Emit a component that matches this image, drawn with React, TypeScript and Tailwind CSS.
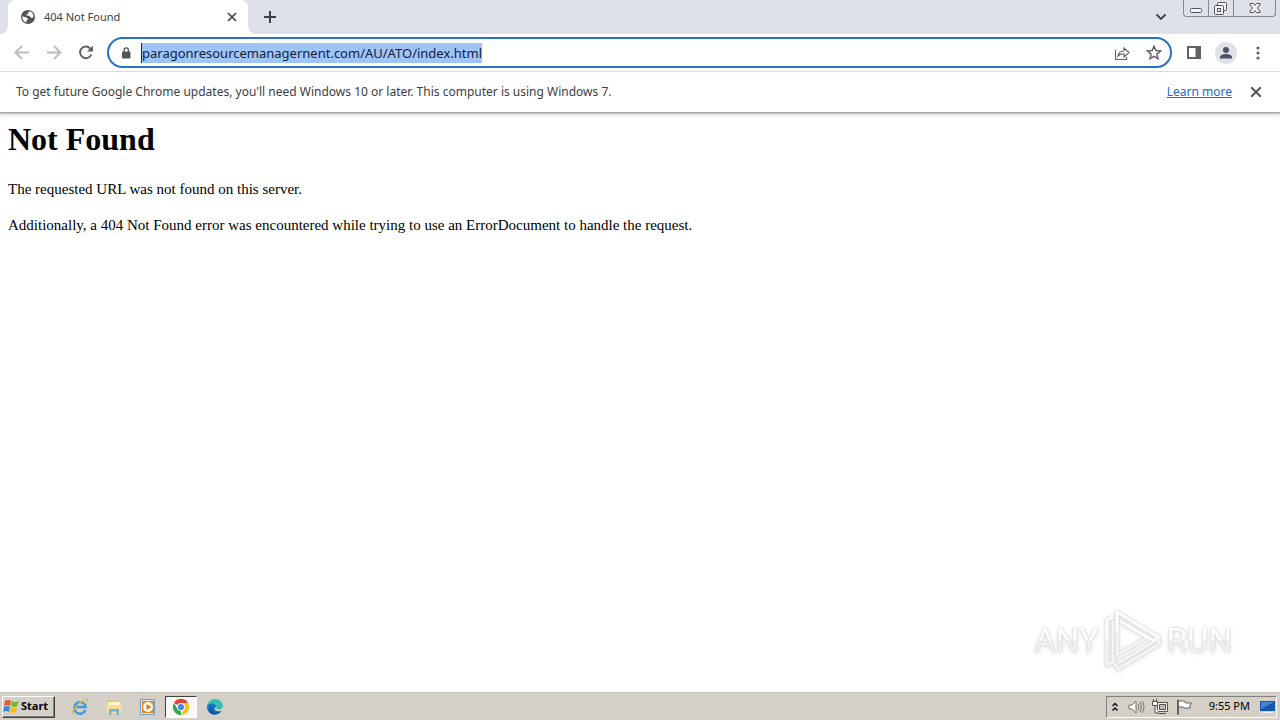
import { useState } from "react";
import type { ReactNode } from "react";

const pageUrl = "paragonresourcemanagernent.com/AU/ATO/index.html";

interface IconButtonProps {
  label: string;
  className?: string;
  children: ReactNode;
}

function IconButton({ label, className = "", children }: IconButtonProps) {
  return (
    <button
      aria-label={label}
      className={`flex shrink-0 items-center justify-center ${className}`}
    >
      {children}
    </button>
  );
}

function CrossIcon({ className }: { className: string }) {
  return (
    <svg viewBox="0 0 10 10" className={className} fill="none" stroke="currentColor" strokeWidth="1.6">
      <path d="M1 1l8 8M9 1L1 9" />
    </svg>
  );
}

function WindowControls() {
  return (
    <div className="flex h-[17px] w-[93px] shrink-0 overflow-hidden rounded-b-[4px] border border-t-0 border-[#85888e] text-[#50545a]">
      <IconButton label="Minimize" className="w-[25px] border-r border-[#85888e]">
        <svg viewBox="0 0 24 16" className="h-4 w-6" fill="#f4f5f7" stroke="currentColor">
          <rect x="6.500" y="8.500" width="11" height="4" rx="1" />
        </svg>
      </IconButton>
      <IconButton label="Restore" className="w-[25px] border-r border-[#85888e]">
        <svg viewBox="0 0 24 16" className="h-4 w-6" fill="#f4f5f7" stroke="currentColor">
          <rect x="8.500" y="2.500" width="9" height="8" rx="1" />
          <rect x="5.500" y="5.500" width="9" height="9" rx="1" />
          <rect x="8.500" y="8.500" width="3" height="3" />
        </svg>
      </IconButton>
      <IconButton label="Close window" className="flex-1">
        <svg viewBox="0 0 14 14" className="size-3.5" fill="#f4f5f7" stroke="currentColor">
          <path d="M2 2.500h3.500L7 4.500l1.500-2H12v1.500L9.300 7 12 10v1.500H8.500L7 9.500l-1.500 2H2V10l2.700-3L2 4z" />
        </svg>
      </IconButton>
    </div>
  );
}

function TabStrip() {
  return (
    <div className="flex h-[34px] items-start bg-[#dee1e8]">
      <div className="flex h-[34px] w-2 shrink-0 bg-white">
        <div className="w-full rounded-br-lg bg-[#dee1e8]" />
      </div>
      <div className="flex h-[34px] w-60 shrink-0 items-center rounded-t-lg bg-white pr-2.5 pl-3">
        <svg viewBox="0 0 16 16" className="size-4 shrink-0">
          <circle cx="8" cy="8" r="7" fill="#505357" />
          <path d="M9.500 2.300L8.400 3.300 8.200 4.700 6.500 5.200 6.600 6.600 9.500 6.800 10.500 8.600 12.400 8.900 13.600 7.200A5.700 5.700 0 0 0 9.500 2.300z" fill="#fff" />
          <path d="M2.400 7.300L5.500 8.300 7.600 9.100 7.800 10.700 6.500 11.300 6.400 13.400A5.600 5.600 0 0 1 2.400 7.300z" fill="#fff" />
        </svg>
        <span className="ml-2 flex-1 text-[11px] text-[#3c4043]">404 Not Found</span>
        <IconButton label="Close tab" className="size-3 text-[#3c4043]">
          <CrossIcon className="size-2.5" />
        </IconButton>
      </div>
      <div className="flex h-[34px] w-2 shrink-0 bg-white">
        <div className="w-full rounded-bl-lg bg-[#dee1e8]" />
      </div>
      <IconButton label="New tab" className="h-[34px] w-7">
        <svg viewBox="0 0 12 12" className="size-3" fill="none" stroke="#3c4043" strokeWidth="2">
          <path d="M6 0v12M0 6h12" />
        </svg>
      </IconButton>
      <div className="flex-1" />
      <IconButton label="Search tabs" className="mr-3.5 h-[34px] w-4">
        <svg viewBox="0 0 12 8" className="h-2 w-3" fill="none" stroke="#3c4043" strokeWidth="1.800">
          <path d="M1.500 1.500L6 6l4.500-4.500" />
        </svg>
      </IconButton>
      <WindowControls />
      <div className="w-1 shrink-0" />
    </div>
  );
}

function Toolbar() {
  const [url, setUrl] = useState(pageUrl);

  return (
    <div className="flex h-[38px] items-center gap-3 border-b border-[#dadce0] bg-white px-3.5 text-[#5f6368]">
      <IconButton label="Back" className="w-4 text-[#babcbe]">
        <svg viewBox="0 0 16 16" className="size-4" fill="none" stroke="currentColor" strokeWidth="1.800">
          <path d="M15 7.500H2M8 1L1.500 7.500 8 14" />
        </svg>
      </IconButton>
      <IconButton label="Forward" className="ml-1 w-4 text-[#babcbe]">
        <svg viewBox="0 0 16 16" className="size-4" fill="none" stroke="currentColor" strokeWidth="1.800">
          <path d="M1 7.500h13M8 1l6.500 6.500L8 14" />
        </svg>
      </IconButton>
      <IconButton label="Reload" className="ml-1 w-4">
        <svg viewBox="0 0 16 16" className="size-4" fill="none" stroke="currentColor" strokeWidth="2">
          <path d="M13.300 9.500A5.800 5.800 0 1 1 12.200 3.500" />
          <path d="M15 .5v6H9z" fill="currentColor" stroke="none" />
        </svg>
      </IconButton>
      <div className="ml-px flex h-[31px] flex-1 items-center rounded-full border-2 border-[#2870cc] pr-2 pl-3">
        <svg viewBox="0 0 10 12" className="h-3 w-2.5 shrink-0">
          <rect x="1" y="4.500" width="8.500" height="7" rx="1" fill="#505357" />
          <path d="M3 5V3a2.200 2.200 0 0 1 4.400 0v2" fill="none" stroke="#505357" strokeWidth="1.300" />
        </svg>
        <div className="ml-2.5 flex min-w-0 flex-1">
          <input
            aria-label="Address"
            value={url}
            spellCheck={false}
            onChange={(e) => setUrl(e.target.value)}
            className="field-sizing-content h-5 max-w-full border-l border-[#202124] bg-[#9fc5f8] text-[13px] text-[#132238] outline-none"
          />
        </div>
        <IconButton label="Share" className="w-4">
          <svg viewBox="0 0 16 16" className="size-4" fill="none" stroke="currentColor" strokeWidth="1.200">
            <path d="M1.500 5v9.500h11V12" />
            <path d="M4 11c.5-3.500 2.500-5 6-5V3l5 4.500-5 4.500V9C7.500 8.800 5.500 9.300 4 11z" />
          </svg>
        </IconButton>
        <IconButton label="Bookmark this page" className="ml-4 w-4">
          <svg viewBox="0 0 16 16" className="size-4" fill="none" stroke="currentColor" strokeWidth="1.500">
            <path d="M8 1.300l1.800 4.300 4.700.4-3.600 3.100 1.100 4.600L8 11.300l-4 2.400 1.100-4.600L1.500 6l4.700-.4z" />
          </svg>
        </IconButton>
      </div>
      <IconButton label="Side panel" className="ml-0.5 w-4">
        <svg viewBox="0 0 16 16" className="size-4">
          <path d="M1 1h14v13H1z" fill="currentColor" />
          <path d="M3 3h6.500v9H3z" fill="#fff" />
        </svg>
      </IconButton>
      <IconButton label="Profile" className="w-6">
        <svg viewBox="0 0 22 22" className="size-[22px]">
          <circle cx="11" cy="11" r="11" fill="#dfe2e6" />
          <circle cx="11" cy="8" r="3" fill="#4a5368" />
          <path d="M5 16.500v-1.500c0-2 3.500-3 6-3s6 1 6 3v1.500z" fill="#4a5368" />
        </svg>
      </IconButton>
      <IconButton label="Menu" className="w-4">
        <svg viewBox="0 0 4 14" className="h-3.5 w-1" fill="currentColor">
          <circle cx="2" cy="2" r="1.600" />
          <circle cx="2" cy="7" r="1.600" />
          <circle cx="2" cy="12" r="1.600" />
        </svg>
      </IconButton>
    </div>
  );
}

function InfoBar() {
  return (
    <div className="flex h-10 items-center bg-white px-4 text-xs text-[#3c4043]">
      <p className="flex-1">
        To get future Google Chrome updates, you'll need Windows 10 or later. This computer is using Windows 7.
      </p>
      <a href="#learn-more" className="text-[#2369c8] underline">
        Learn more
      </a>
      <IconButton label="Dismiss" className="ml-4 w-4 text-[#505357]">
        <CrossIcon className="size-3" />
      </IconButton>
    </div>
  );
}

function Watermark() {
  return (
    <div className="absolute right-12 bottom-5 flex items-center font-['Liberation_Sans_Narrow','Roboto',sans-serif] text-[33px] leading-none [filter:drop-shadow(0_0_1px_#ccc)_drop-shadow(0_1px_2px_#e5e5e5)]">
      <span className="bg-linear-to-b from-white from-50% to-[#f1f1f1] to-50% bg-clip-text text-transparent">ANY</span>
      <svg viewBox="0 0 60 64" className="mx-1 h-16 w-[60px]" fill="none" stroke="#fff" strokeWidth="3">
        <path d="M14 24V4l41 25-4 4-34-20" />
        <path d="M10 9L4 12v20" />
        <path d="M14 24v23l29-17M4 32v25l6-3V14M10 54l5 7 41-25v-5L15 55" stroke="#f4f4f4" />
      </svg>
      <span className="bg-linear-to-b from-white from-50% to-[#f1f1f1] to-50% bg-clip-text text-transparent">RUN</span>
    </div>
  );
}

function ExplorerIcon() {
  return (
    <svg viewBox="0 0 18 18" className="size-[18px]" fill="none">
      <path d="M14.500 12A5.800 5.800 0 1 1 14.800 9H4" stroke="#3a9cdc" strokeWidth="2.400" />
      <path d="M3 15.500C-.5 17 2 10.500 8 5.500S18-.5 16 4" stroke="#e4b74c" strokeWidth="1.300" />
    </svg>
  );
}

function FolderIcon() {
  return (
    <svg viewBox="0 0 18 18" className="size-[18px]">
      <path d="M2 2h5l1 1h7v12H2z" fill="#dfc47a" />
      <path d="M3 4h12v4H3z" fill="#fff6bd" />
      <path d="M1.500 7h15v8.500h-15z" fill="#f3df98" />
      <path d="M4 17v-6h10v6h-2.500v-3.500h-5V17z" fill="#6cb4dd" />
    </svg>
  );
}

function MediaIcon() {
  return (
    <svg viewBox="0 0 18 18" className="size-[18px]">
      <rect x="1.500" y="1.500" width="14" height="15" fill="#dceaf5" stroke="#6ca1cb" />
      <path d="M3 3h12v12H3z" fill="#ed8622" />
      <circle cx="9" cy="9" r="5" fill="#fff" />
      <path d="M7.500 6l5 3-5 3z" fill="#e57515" />
    </svg>
  );
}

function ChromeIcon() {
  return (
    <svg viewBox="0 0 18 18" className="size-[18px]">
      <path d="M9 9L2 5A8 8 0 0 1 16 5z" fill="#e14335" />
      <path d="M9 9V5h7A8 8 0 0 1 9 17l3.500-6z" fill="#fbc116" />
      <path d="M2 5l3.500 6L9 13l0 4A8 8 0 0 1 2 5z" fill="#2da94f" />
      <circle cx="9" cy="9" r="4" fill="#fff" />
      <circle cx="9" cy="9" r="3.100" fill="#4285f4" />
    </svg>
  );
}

function EdgeIcon() {
  return (
    <svg viewBox="0 0 18 18" className="size-[18px]">
      <path d="M1 10C.5 4.500 4.500 1 9 1s8 3.500 8 7-6 4.500-6.500 2.500C12 7 4 4 1 10z" fill="#38bdb2" />
      <path d="M1 9c2-5 9-4 9.500 0C8 9 7 14 15.500 13 12.500 18 1.500 18.500 1 9z" fill="#1672c5" />
      <path d="M6.500 8c-3 5 2 9 9 5-4.500 6-13 3.500-12-1 .3-2 1.500-3.500 3-4z" fill="#155297" />
    </svg>
  );
}

function Taskbar() {
  return (
    <footer className="flex h-7 shrink-0 items-center border-t border-[#c4c1bb] bg-[#d4d0c8] pr-[3px] pl-[2px]">
      <button className="flex h-[22px] w-[53px] shrink-0 items-center gap-px border border-t-white border-r-[#404040] border-b-[#404040] border-l-white text-[11px] font-bold text-black shadow-[inset_-1px_-1px_0_#808080]">
        <svg viewBox="0 0 17 17" className="size-[17px] shrink-0">
          <path d="M2 3q3-2 6 0L7 8Q4 6 1 8z" fill="#e85d26" />
          <path d="M9 3q3 2 7 0l-2 5q-3 2-6 0z" fill="#76b82c" />
          <path d="M1 9q3-2 6 0l-1 5q-3-2-6 0z" fill="#318bd0" />
          <path d="M8 9q3 2 6 0l-1 5q-3 2-6 0z" fill="#f5b91e" />
        </svg>
        Start
      </button>
      <nav aria-label="Pinned programs" className="ml-2 flex items-center">
        <IconButton label="Internet Explorer" className="h-[22px] w-[34px]">
          <ExplorerIcon />
        </IconButton>
        <IconButton label="Windows Explorer" className="h-[22px] w-[34px]">
          <FolderIcon />
        </IconButton>
        <IconButton label="Media Player" className="h-[22px] w-[34px]">
          <MediaIcon />
        </IconButton>
        <IconButton
          label="Google Chrome"
          className="h-[22px] w-8 border border-t-[#404040] border-r-white border-b-white border-l-[#404040] bg-[#f9f9f7]"
        >
          <ChromeIcon />
        </IconButton>
        <IconButton label="Microsoft Edge" className="h-[22px] w-9">
          <EdgeIcon />
        </IconButton>
      </nav>
      <div className="flex-1" />
      <div className="flex h-[22px] items-center border border-t-[#808080] border-r-white border-b-white border-l-[#808080] pl-1">
        <IconButton label="Show hidden icons" className="w-2">
          <svg viewBox="0 0 8 10" className="h-2.5 w-2" fill="none" stroke="#111" strokeWidth="1.500">
            <path d="M1.500 4L4 1.500 6.500 4M1.500 8.500L4 6l2.500 2.500" />
          </svg>
        </IconButton>
        <IconButton label="Volume" className="ml-2 w-[18px]">
          <svg viewBox="0 0 18 18" className="size-[18px]" fill="none" stroke="#77736c">
            <path d="M2 7h3l4-4v12l-4-4H2z" fill="#fff" />
            <path d="M11 6q2 3 0 6M13 4q3 5 0 10M15 3q4 6 0 12" />
          </svg>
        </IconButton>
        <IconButton label="Network" className="ml-1.5 w-[18px]">
          <svg viewBox="0 0 18 18" className="size-[18px]" fill="#f4f3ef" stroke="#55524d">
            <path d="M6.500 4.500h10v9h-10zM8 15.500h7" />
            <path d="M8.500 6.500h6v5h-6z" fill="#bbb9b4" />
            <path d="M1.500 3.500h5v4h-5zM2.500 1v2M5.500 1v2M4 8v7h4" />
          </svg>
        </IconButton>
        <IconButton label="Action Center" className="ml-1.5 w-[18px]">
          <svg viewBox="0 0 18 18" className="size-[18px]" fill="#fff" stroke="#66635e">
            <path d="M2.500 2v14.500h1V2zM3.500 3h6l1 2h6l-2 3 1 2H9l-1-1H3.500z" />
          </svg>
        </IconButton>
        <time className="ml-4 text-[11px] text-black">9:55 PM</time>
        <IconButton label="Show desktop" className="ml-2 w-[18px]">
          <svg viewBox="0 0 18 18" className="size-[18px]">
            <path d="M2 3h15v10H2z" fill="#1757ab" />
            <path d="M3 4h13L3 11z" fill="#4387d0" />
            <path d="M5 14h9l2 1H3z" fill="#edf3f9" />
          </svg>
        </IconButton>
      </div>
    </footer>
  );
}

export default function App() {
  return (
    <div className="flex min-h-screen flex-col bg-white font-['Noto_Sans',sans-serif]">
      <header className="relative shadow-[0_1px_0_#a8a8a8,0_2px_0_#c4c4c4,0_4px_3px_#e5e5e5]">
        <TabStrip />
        <Toolbar />
        <InfoBar />
      </header>
      <main className="relative flex-1 px-2 pt-[9px] font-['Liberation_Serif',serif] text-[15px] leading-[18px] text-black">
        <h1 className="text-[32px] leading-[37px] font-bold">Not Found</h1>
        <p className="mt-[22px]">The requested URL was not found on this server.</p>
        <p className="mt-[18px]">
          Additionally, a 404 Not Found error was encountered while trying to use an ErrorDocument to handle the request.
        </p>
        <Watermark />
      </main>
      <Taskbar />
    </div>
  );
}
